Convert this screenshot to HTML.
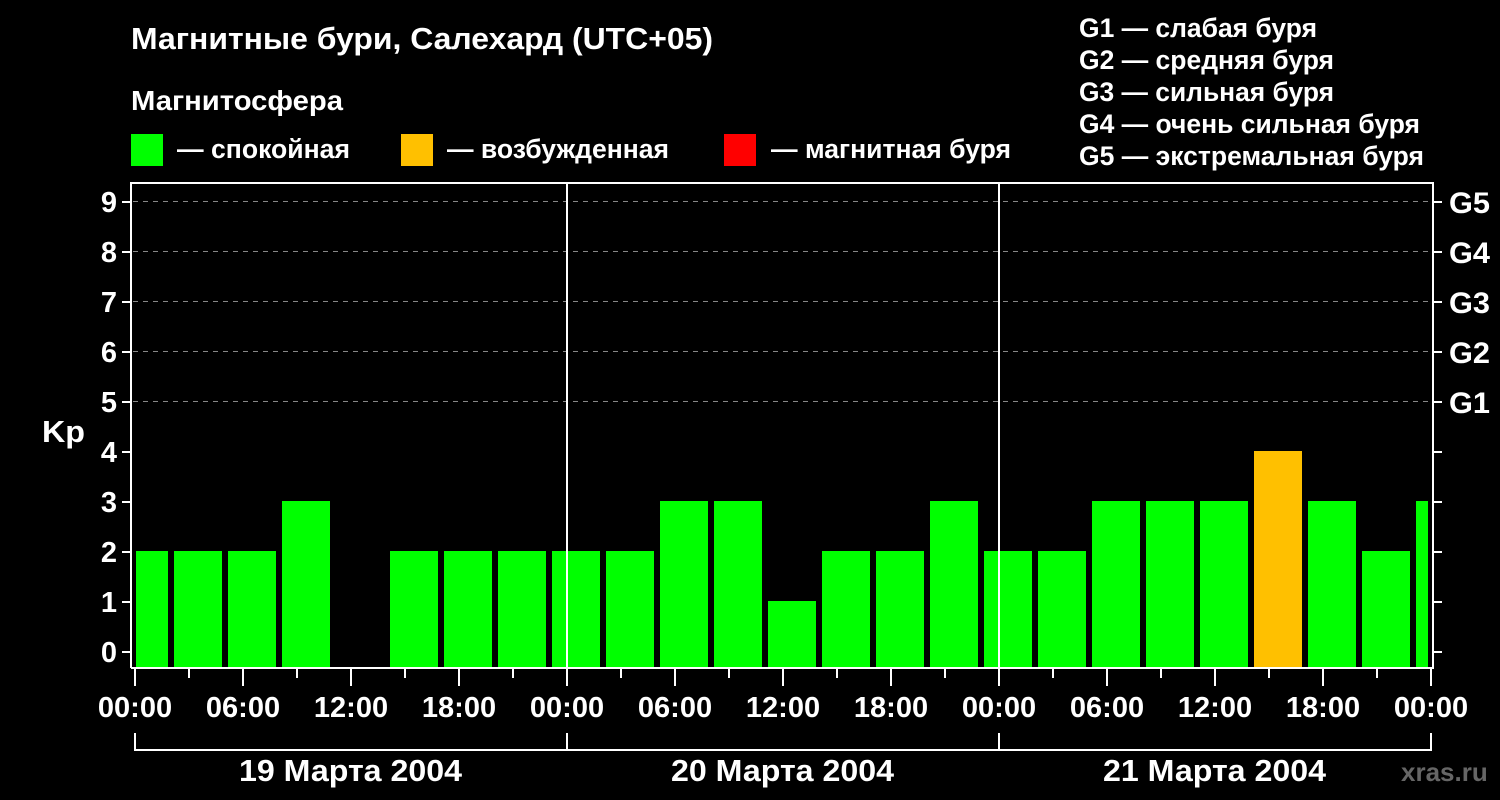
<!DOCTYPE html>
<html><head><meta charset="utf-8"><style>
html,body{margin:0;padding:0;background:#000;width:1500px;height:800px;overflow:hidden}
svg{display:block}
text{font-family:"Liberation Sans",sans-serif;font-weight:bold;fill:#fff}
</style></head><body>
<svg width="1500" height="800" viewBox="0 0 1500 800">
<text x="131" y="49" font-size="31" textLength="582" lengthAdjust="spacingAndGlyphs">Магнитные бури, Салехард (UTC+05)</text>
<text x="131" y="110" font-size="28" textLength="212" lengthAdjust="spacingAndGlyphs">Магнитосфера</text>
<rect x="131" y="134" width="32" height="32" fill="#00ff00"/>
<text x="177" y="158" font-size="27" textLength="173" lengthAdjust="spacingAndGlyphs">— спокойная</text>
<rect x="401" y="134" width="32" height="32" fill="#ffc000"/>
<text x="447" y="158" font-size="27" textLength="222" lengthAdjust="spacingAndGlyphs">— возбужденная</text>
<rect x="724" y="134" width="32" height="32" fill="#ff0000"/>
<text x="771" y="158" font-size="27" textLength="240" lengthAdjust="spacingAndGlyphs">— магнитная буря</text>
<g font-size="27">
<text x="1079" y="37" textLength="238" lengthAdjust="spacingAndGlyphs">G1 — слабая буря</text>
<text x="1079" y="69" textLength="255" lengthAdjust="spacingAndGlyphs">G2 — средняя буря</text>
<text x="1079" y="101" textLength="255" lengthAdjust="spacingAndGlyphs">G3 — сильная буря</text>
<text x="1079" y="133" textLength="341" lengthAdjust="spacingAndGlyphs">G4 — очень сильная буря</text>
<text x="1079" y="165" textLength="345" lengthAdjust="spacingAndGlyphs">G5 — экстремальная буря</text>
</g>
<g stroke="#888" stroke-width="1" stroke-dasharray="5,5">
<line x1="133" y1="201.5" x2="1432" y2="201.5"/>
<line x1="133" y1="251.5" x2="1432" y2="251.5"/>
<line x1="133" y1="301.5" x2="1432" y2="301.5"/>
<line x1="133" y1="351.5" x2="1432" y2="351.5"/>
<line x1="133" y1="401.5" x2="1432" y2="401.5"/>
</g>
<g fill="#00ff00">
<rect x="136" y="551" width="32" height="117"/>
<rect x="174" y="551" width="48" height="117"/>
<rect x="228" y="551" width="48" height="117"/>
<rect x="282" y="501" width="48" height="167"/>
<rect x="390" y="551" width="48" height="117"/>
<rect x="444" y="551" width="48" height="117"/>
<rect x="498" y="551" width="48" height="117"/>
<rect x="552" y="551" width="48" height="117"/>
<rect x="606" y="551" width="48" height="117"/>
<rect x="660" y="501" width="48" height="167"/>
<rect x="714" y="501" width="48" height="167"/>
<rect x="768" y="601" width="48" height="67"/>
<rect x="822" y="551" width="48" height="117"/>
<rect x="876" y="551" width="48" height="117"/>
<rect x="930" y="501" width="48" height="167"/>
<rect x="984" y="551" width="48" height="117"/>
<rect x="1038" y="551" width="48" height="117"/>
<rect x="1092" y="501" width="48" height="167"/>
<rect x="1146" y="501" width="48" height="167"/>
<rect x="1200" y="501" width="48" height="167"/>
<rect x="1308" y="501" width="48" height="167"/>
<rect x="1362" y="551" width="48" height="117"/>
<rect x="1416" y="501" width="12" height="167"/>
</g>
<rect x="1254" y="451" width="48" height="217" fill="#ffc000"/>
<g stroke="#fff" stroke-width="2" fill="none">
<polyline points="131,668 131,183 1433,183 1433,668 131,668"/>
<line x1="567" y1="183" x2="567" y2="668"/>
<line x1="999" y1="183" x2="999" y2="668"/>
<path d="M122 652h9M122 602h9M122 552h9M122 502h9M122 452h9M122 402h9M122 352h9M122 302h9M122 252h9M122 202h9"/>
<path d="M1433 652h9M1433 602h9M1433 552h9M1433 502h9M1433 452h9M1433 402h9M1433 352h9M1433 302h9M1433 252h9M1433 202h9"/>
<path d="M135 668v18M243 668v18M351 668v18M459 668v18M567 668v18M675 668v18M783 668v18M891 668v18M999 668v18M1107 668v18M1215 668v18M1323 668v18M1431 668v18"/>
<path d="M189 668v10M297 668v10M405 668v10M513 668v10M621 668v10M729 668v10M837 668v10M945 668v10M1053 668v10M1161 668v10M1269 668v10M1377 668v10"/>
<path d="M135 733v17H1431v-17M567 733v17M999 733v17"/>
</g>
<g font-size="29" text-anchor="end">
<text x="117" y="662">0</text><text x="117" y="612">1</text><text x="117" y="562">2</text>
<text x="117" y="512">3</text><text x="117" y="462">4</text><text x="117" y="412">5</text>
<text x="117" y="362">6</text><text x="117" y="312">7</text><text x="117" y="262">8</text>
<text x="117" y="212">9</text>
</g>
<text x="42" y="442" font-size="31" textLength="43" lengthAdjust="spacingAndGlyphs">Kp</text>
<g font-size="30">
<text x="1449" y="213" textLength="41" lengthAdjust="spacingAndGlyphs">G5</text><text x="1449" y="263" textLength="41" lengthAdjust="spacingAndGlyphs">G4</text><text x="1449" y="313" textLength="41" lengthAdjust="spacingAndGlyphs">G3</text>
<text x="1449" y="363" textLength="41" lengthAdjust="spacingAndGlyphs">G2</text><text x="1449" y="413" textLength="41" lengthAdjust="spacingAndGlyphs">G1</text>
</g>
<g font-size="29" text-anchor="middle">
<text x="135" y="717">00:00</text><text x="243" y="717">06:00</text><text x="351" y="717">12:00</text>
<text x="459" y="717">18:00</text><text x="567" y="717">00:00</text><text x="675" y="717">06:00</text>
<text x="783" y="717">12:00</text><text x="891" y="717">18:00</text><text x="999" y="717">00:00</text>
<text x="1107" y="717">06:00</text><text x="1215" y="717">12:00</text><text x="1323" y="717">18:00</text>
<text x="1431" y="717">00:00</text>
</g>
<g font-size="31">
<text x="239" y="781" textLength="223" lengthAdjust="spacingAndGlyphs">19 Марта 2004</text>
<text x="671" y="781" textLength="223" lengthAdjust="spacingAndGlyphs">20 Марта 2004</text>
<text x="1103" y="781" textLength="223" lengthAdjust="spacingAndGlyphs">21 Марта 2004</text>
</g>
<text x="1401" y="781" font-size="26" style="fill:#666" font-weight="normal">xras.ru</text>
</svg>
</body></html>
